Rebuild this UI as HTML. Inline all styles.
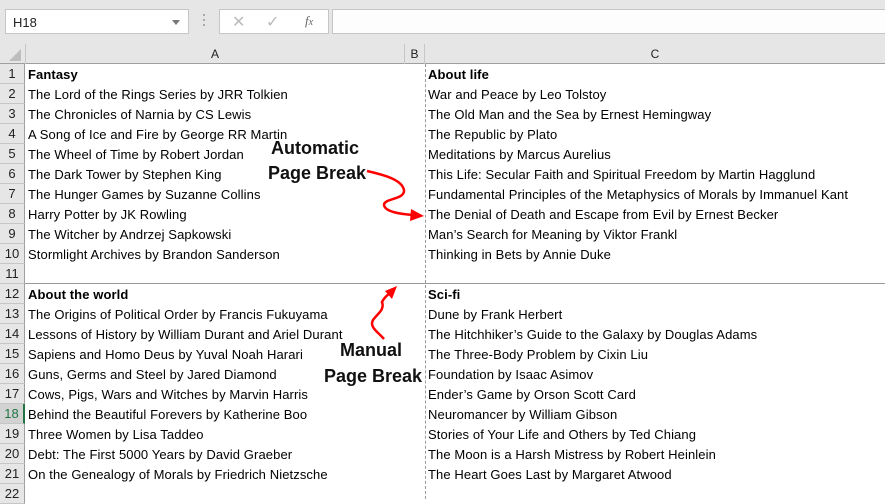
<!DOCTYPE html>
<html><head><meta charset="utf-8"><style>
*{margin:0;padding:0;box-sizing:border-box}
body{width:885px;height:499px;overflow:hidden;background:#fff;font-family:"Liberation Sans",Calibri,sans-serif;position:relative}
.top{position:absolute;left:0;top:0;width:885px;height:64px;background:#e6e6e6;border-bottom:1px solid #9f9f9f}
.nb{position:absolute;left:5px;top:9px;width:184px;height:25px;background:#fff;border:1px solid #c6c6c6;font-size:13px;padding:5px 0 0 7px;color:#222}
.nb:after{content:"";position:absolute;right:8px;top:10px;border:4px solid transparent;border-top:5px solid #777}
.fx{position:absolute;left:219px;top:9px;width:110px;height:25px;background:#fff;border:1px solid #c6c6c6}
.fi{position:absolute;left:332px;top:9px;width:560px;height:25px;background:#fdfdfd;border:1px solid #c6c6c6}
.dots{position:absolute;left:203px;top:14px;width:2px;height:14px;background:repeating-linear-gradient(#aaa 0 2px,transparent 2px 5px)}
.ch{position:absolute;top:44px;height:20px;font-size:12px;color:#222;text-align:center;line-height:20px;border-right:1px solid #c6c6c6}
.rh{position:absolute;left:0;width:25px;height:20px;background:#e6e6e6;border-bottom:1px solid #c6c6c6;border-right:1px solid #9f9f9f;font-size:13px;text-align:center;line-height:20px;color:#222}
.c{position:absolute;font-size:13px;line-height:20px;height:20px;white-space:nowrap;color:#000;letter-spacing:0.1px}
b{font-weight:bold}
.ann{position:absolute;font-size:18px;font-weight:bold;color:#111;white-space:nowrap;background:#fff}
</style></head><body>
<div class="top"></div>
<div class="nb">H18</div>
<div class="dots"></div>
<div class="fx">
<span style="position:absolute;left:12px;top:2px;font-size:16px;color:#bbb">✕</span>
<span style="position:absolute;left:46px;top:2px;font-size:16px;color:#bbb">✓</span>
<span style="position:absolute;left:85px;top:3px;font-size:13px;font-style:italic;font-family:'Liberation Serif',serif;color:#666">f<span style="font-size:10px">x</span></span>
</div>
<div class="fi"></div>
<svg style="position:absolute;left:8px;top:48px" width="14" height="14"><polygon points="13,1 13,13 1,13" fill="#bdbdbd"/></svg>
<div class="ch" style="left:25px;width:380px;border-left:1px solid #c6c6c6">A</div>
<div class="ch" style="left:405px;width:20px">B</div>
<div class="ch" style="left:425px;width:460px;border-right:none">C</div>
<div id="rows"></div>
<div style="position:absolute;left:425px;top:64px;height:435px;border-left:1px dashed #9a9a9a"></div>
<div style="position:absolute;left:25px;top:283px;width:860px;border-top:1px solid #9a9a9a"></div>
<div class="ann" style="left:271px;top:138px;background:none">Automatic</div>
<div class="ann" style="left:268px;top:163px;background:none">Page Break</div>
<div class="ann" style="left:340px;top:340px;background:none">Manual</div>
<div class="ann" style="left:324px;top:366px;background:none">Page Break</div>
<svg style="position:absolute;left:0;top:0" width="885" height="499">
<path d="M367,171 C385,175 402,180 404,190 C405,200 384,198 384,205 C385,212 400,214 414,215" fill="none" stroke="#f00" stroke-width="2.5"/>
<polygon points="424,216 411,209 410,221" fill="#f00"/>
<path d="M384,339 C378,332 369,327 373,320 C377,314 385,310 382,302 C384,298 386,296 390,293" fill="none" stroke="#f00" stroke-width="2.5"/>
<polygon points="397,286 385,291 392,299" fill="#f00"/>
</svg>
<script>
var A=["<b>Fantasy</b>","The Lord of the Rings Series by JRR Tolkien","The Chronicles of Narnia by CS Lewis","A Song of Ice and Fire by George RR Martin","The Wheel of Time by Robert Jordan","The Dark Tower by Stephen King","The Hunger Games by Suzanne Collins","Harry Potter by JK Rowling","The Witcher by Andrzej Sapkowski","Stormlight Archives by Brandon Sanderson","","<b>About the world</b>","The Origins of Political Order by Francis Fukuyama","Lessons of History by William Durant and Ariel Durant","Sapiens and Homo Deus by Yuval Noah Harari","Guns, Germs and Steel by Jared Diamond","Cows, Pigs, Wars and Witches by Marvin Harris","Behind the Beautiful Forevers by Katherine Boo","Three Women by Lisa Taddeo","Debt: The First 5000 Years by David Graeber","On the Genealogy of Morals by Friedrich Nietzsche",""];
var C=["<b>About life</b>","War and Peace by Leo Tolstoy","The Old Man and the Sea by Ernest Hemingway","The Republic by Plato","Meditations by Marcus Aurelius","This Life: Secular Faith and Spiritual Freedom by Martin Hagglund","Fundamental Principles of the Metaphysics of Morals by Immanuel Kant","The Denial of Death and Escape from Evil by Ernest Becker","Man’s Search for Meaning by Viktor Frankl","Thinking in Bets by Annie Duke","","<b>Sci-fi</b>","Dune by Frank Herbert","The Hitchhiker’s Guide to the Galaxy by Douglas Adams","The Three-Body Problem by Cixin Liu","Foundation by Isaac Asimov","Ender’s Game by Orson Scott Card","Neuromancer by William Gibson","Stories of Your Life and Others by Ted Chiang","The Moon is a Harsh Mistress by Robert Heinlein","The Heart Goes Last by Margaret Atwood",""];
var h="";
for(var i=0;i<22;i++){var t=64+i*20;
var sel=i==17;
h+='<div class="rh" style="top:'+t+'px;'+(sel?'background:#d2d2d2;color:#217346;border-right:2px solid #217346':'')+'">'+(i+1)+'</div>';
h+='<div class="c" style="left:28px;top:'+(t+1)+'px">'+A[i]+'</div>';
h+='<div class="c" style="left:428px;top:'+(t+1)+'px">'+C[i]+'</div>';}
document.getElementById('rows').innerHTML=h;
</script>
</body></html>
